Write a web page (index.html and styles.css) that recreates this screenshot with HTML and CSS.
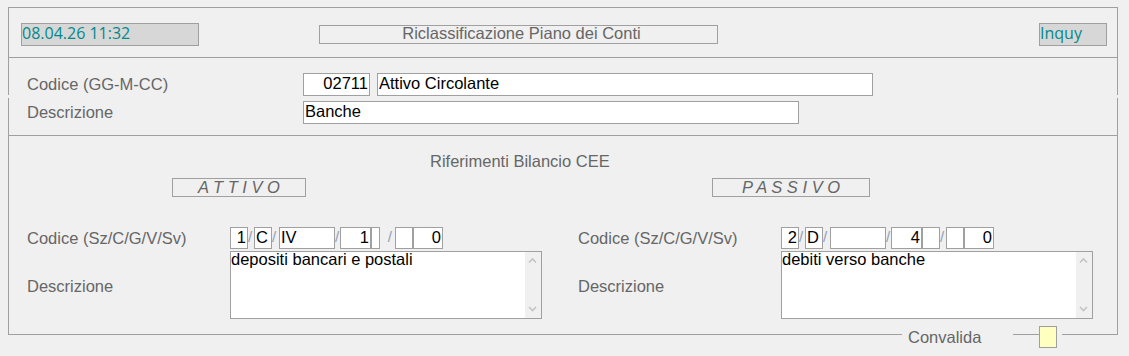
FILE: index.html
```html
<!DOCTYPE html>
<html lang="it">
<head>
<meta charset="utf-8">
<title>Riclassificazione Piano dei Conti</title>
<link rel="stylesheet" href="styles.css">
</head>
<body>

<div class="frame">

 <div class="panel-top">
  <div class="header">
   <div class="stamp date">08.04.26 11:32</div>
   <div class="title">Riclassificazione Piano dei Conti</div>
   <div class="stamp mode">Inquy</div>
  </div>
  <div class="row row-code">
   <span class="label">Codice (GG-M-CC)</span>
   <div class="input num w-code">02711</div>
   <div class="input w-long gap">Attivo Circolante</div>
  </div>
 </div>

 <div class="panel-bottom">
  <div class="row row-desc">
   <span class="label">Descrizione</span>
   <div class="input w-long">Banche</div>
  </div>

  <div class="cee">
   <div class="cee-title">Riferimenti Bilancio CEE</div>
   <div class="cols">

    <div class="col">
     <div class="side side-attivo">A T T I V O</div>
     <div class="field">
      <span class="flabel">Codice (Sz/C/G/V/Sv)</span>
      <div class="codes">
       <div class="box b18 num">1</div><span class="sl s6">/</span>
       <div class="box b18">C</div><span class="sl s7">/</span>
       <div class="box b56">IV</div><span class="sl s5">/</span>
       <div class="box b31 num">1</div><div class="box b9"></div><span class="sl s15">/</span>
       <div class="box b18"></div><div class="box b30 num">0</div>
      </div>
     </div>
     <div class="field field-memo">
      <span class="flabel">Descrizione</span>
      <div class="memo">
       <div class="memo-text">depositi bancari e postali</div>
       <div class="memo-bar">
        <svg width="16" height="66" viewBox="0 0 16 66"><polyline points="4,10.5 7.5,7 11,10.5" fill="none" stroke="#c4c4c4" stroke-width="1.6"/><polyline points="4,55 7.5,58.5 11,55" fill="none" stroke="#c4c4c4" stroke-width="1.6"/></svg>
       </div>
      </div>
     </div>
    </div>

    <div class="col">
     <div class="side side-passivo">P A S S I V O</div>
     <div class="field">
      <span class="flabel">Codice (Sz/C/G/V/Sv)</span>
      <div class="codes">
       <div class="box b18 num">2</div><span class="sl s6">/</span>
       <div class="box b18">D</div><span class="sl s7">/</span>
       <div class="box b56"></div><span class="sl s5">/</span>
       <div class="box b31 num">4</div><div class="box b18"></div><span class="sl s6">/</span>
       <div class="box b18"></div><div class="box b30 num">0</div>
      </div>
     </div>
     <div class="field field-memo">
      <span class="flabel">Descrizione</span>
      <div class="memo">
       <div class="memo-text">debiti verso banche</div>
       <div class="memo-bar">
        <svg width="16" height="66" viewBox="0 0 16 66"><polyline points="4,10.5 7.5,7 11,10.5" fill="none" stroke="#c4c4c4" stroke-width="1.6"/><polyline points="4,55 7.5,58.5 11,55" fill="none" stroke="#c4c4c4" stroke-width="1.6"/></svg>
       </div>
      </div>
     </div>
    </div>

   </div>
  </div>

  <div class="convalida">
   <span class="conv-label">Convalida</span>
   <span class="conv-line"></span>
   <span class="conv-box"></span>
   <span class="conv-gap"></span>
  </div>
 </div>

</div>

</body>
</html>
```

FILE: styles.css
```css
html, body { height: 100%; }

body {
  margin: 0;
  background: #f0f0f0;
  font-family: "Liberation Sans", Arial, sans-serif;
  font-size: 16.5px;
  color: #666666;
}

.frame { padding: 7px 11px 0 8px; }

.panel-top {
  height: 88px;
  box-sizing: border-box;
  border: 1px solid #a0a0a0;
  border-bottom: 0;
}
.header {
  display: flex;
  align-items: flex-start;
  height: 50px;
  box-sizing: border-box;
  padding: 15px 10px 0 12px;
  border-bottom: 1px solid #a0a0a0;
}
.stamp {
  height: 23px;
  box-sizing: border-box;
  border: 1px solid #a0a0a0;
  background: #d7d7d7;
  color: #00898b;
  font-family: "Open Sans", "Liberation Sans", sans-serif;
  font-size: 16px;
  line-height: 18px;
  white-space: nowrap;
}
.date { width: 178px; }
.mode { width: 68px; margin-left: auto; }
.title {
  width: 399px;
  height: 19px;
  box-sizing: border-box;
  margin: 2px 0 0 120px;
  padding-left: 6px;
  border: 1px solid #a0a0a0;
  text-align: center;
  line-height: 15px;
}

.row { display: flex; align-items: center; padding-left: 18px; }
.row .label { width: 276px; }
.row-code { padding-top: 15px; }
.row-desc {
  height: 38px;
  box-sizing: border-box;
  padding-top: 3px;
  align-items: flex-start;
  border-bottom: 1px solid #a0a0a0;
}
.row-desc .label { line-height: 23px; }

.input {
  height: 23px;
  box-sizing: border-box;
  border: 1px solid #a0a0a0;
  background: #ffffff;
  color: #000000;
  line-height: 19px;
  padding: 0 1px;
  white-space: nowrap;
}
.num { text-align: right; }
.w-code { width: 67px; }
.w-long { width: 496px; }
.gap { margin-left: 7px; }

.panel-bottom {
  position: relative;
  margin-top: 3px;
  border: 1px solid #a0a0a0;
  border-top: 0;
}

.cee { height: 198px; box-sizing: border-box; padding-top: 16px; }
.cee-title { padding-left: 421px; line-height: 19px; }
.cols { display: flex; }
.col { width: 551px; }

.side {
  height: 19px;
  box-sizing: border-box;
  margin-top: 7px;
  border: 1px solid #a0a0a0;
  text-align: center;
  font-style: italic;
  line-height: 17px;
  white-space: pre;
}
.side-attivo { width: 134px; margin-left: 163px; }
.side-passivo { width: 158px; margin-left: 152px; }

.field { display: flex; align-items: center; padding-left: 18px; margin-top: 30px; }
.field-memo { margin-top: 2px; }
.flabel { width: 203px; }
.field-memo .flabel { padding-top: 3px; }

.codes { display: flex; }
.box {
  height: 22px;
  box-sizing: border-box;
  border: 1px solid #a0a0a0;
  background: #ffffff;
  color: #000000;
  line-height: 18px;
  padding: 0 1px;
}
.b9 { width: 9px; }
.b18 { width: 18px; }
.b30 { width: 30px; }
.b31 { width: 31px; }
.b56 { width: 56px; }
.sl { color: #8fa0b8; font-size: 15px; line-height: 20px; }
.s5 { width: 5px; }
.s6 { width: 6px; }
.s7 { width: 7px; }
.s15 { width: 15px; text-align: right; padding-right: 3px; box-sizing: border-box; }

.memo {
  display: flex;
  width: 312px;
  height: 68px;
  box-sizing: border-box;
  border: 1px solid #a0a0a0;
  background: #ffffff;
}
.memo-text { flex: 1; color: #000000; line-height: 15px; }
.memo-bar { width: 16px; background: #f0f0f0; }
.memo-bar svg { display: block; }

.convalida {
  position: absolute;
  right: 55px;
  bottom: -14px;
  display: flex;
  align-items: center;
  height: 22px;
}
.conv-label {
  width: 111px;
  box-sizing: border-box;
  padding-left: 6px;
  background: #f0f0f0;
  line-height: 19px;
}
.conv-line { align-self: flex-start; width: 26px; height: 1px; margin-top: 8px; background: #a0a0a0; }
.conv-box {
  width: 18px;
  height: 22px;
  box-sizing: border-box;
  border: 1px solid #a0a0a0;
  background: #ffffc0;
}
.conv-gap { align-self: flex-start; width: 5px; height: 3px; margin-top: 7px; background: #f0f0f0; }
```
